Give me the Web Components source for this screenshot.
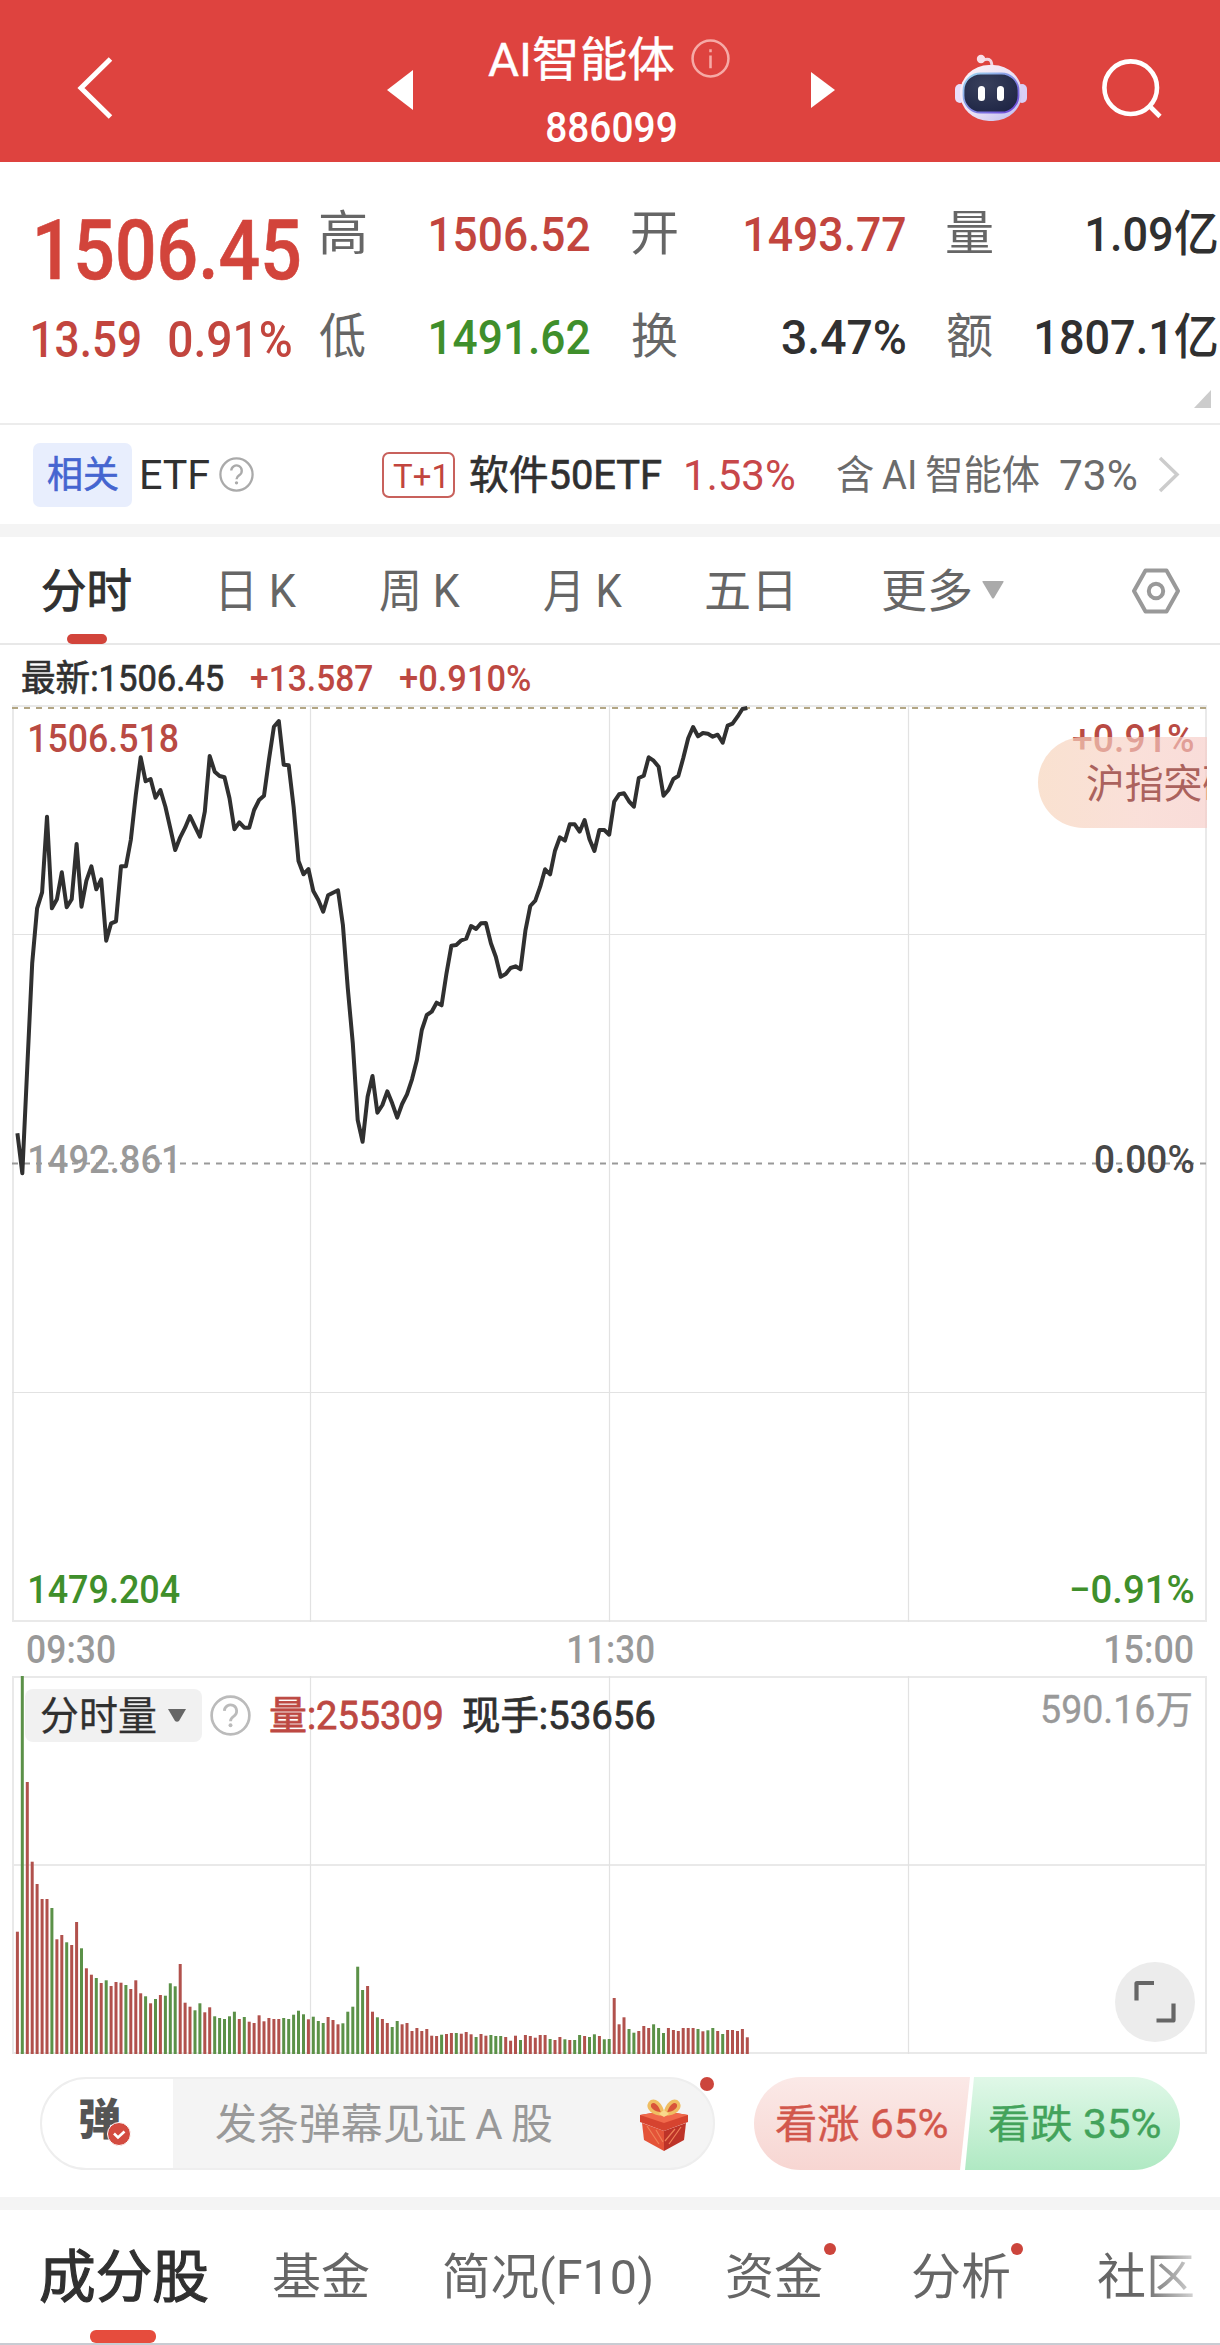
<!DOCTYPE html>
<html lang="zh-CN">
<head>
<meta charset="utf-8">
<title>AI智能体 886099</title>
<style>
    body {
        margin: 0;
        background: #fff;
        width: 1220px;
        height: 2345px;
        overflow: hidden;
        font-family: Roboto, "Noto Sans CJK SC", sans-serif;
        color: #303030;
        --up: #c2453e;
        --down: #3f8f2b;
        --grey: #666;
        --pale: #999;
        --line: #e9e9e9;
    }
</style>
</head>
<body>
<stock-page></stock-page>

<script>
const FONT = 'Roboto, "Noto Sans CJK SC", sans-serif';
const measure = document.createElement('canvas').getContext('2d');

// every element below shares this: template in, shadow root out
class BaseElement extends HTMLElement {
    constructor() {
        super();
        this._shadowRoot = this.attachShadow({ mode: 'open' });
    }

    connectedCallback() {
        const template = document.createElement('template');
        template.innerHTML = this._templateContent();
        this._shadowRoot.appendChild(template.content.cloneNode(true));
    }
}

// One line of text whose ink fills exactly `w` pixels. `ml` is the space before it,
// `stroke` thickens a regular weight to something between regular and medium.
class FitText extends BaseElement {
    _templateContent() {
        const size = Number(this.getAttribute('size'));
        const w = Number(this.getAttribute('w'));
        const weight = this.getAttribute('weight') || 500;
        const ml = this.getAttribute('ml') || 0;
        const stroke = this.getAttribute('stroke') || 0;
        measure.font = `${weight} ${size}px ${FONT}`;
        const m = measure.measureText(this.textContent);
        const scale = w / (m.actualBoundingBoxRight + m.actualBoundingBoxLeft);
        const shift = m.actualBoundingBoxLeft * scale;
        return `
            <style>
                :host {
                    display: block;
                    flex: none;
                    width: ${w}px;
                    height: ${size}px;
                    margin-left: ${ml}px;
                    font: ${weight} ${size}px/${size}px ${FONT};
                    white-space: nowrap;
                    -webkit-text-stroke: ${stroke}px currentColor;
                }
                span {
                    display: block;
                    width: max-content;
                    transform-origin: 0 50%;
                    transform: translate(${shift}px, 1px) scaleX(${scale});
                }
            </style>
            <span><slot></slot></span>
        `;
    }
}

class HelpIcon extends BaseElement {
    _templateContent() {
        const size = this.getAttribute('size');
        const mark = this.getAttribute('mark') || '?';
        return `
            <style>
                :host { display: block; flex: none; width: ${size}px; height: ${size}px; color: #bbb; }
                svg { display: block; }
            </style>
            <svg width="${size}" height="${size}" viewBox="0 0 40 40">
                <circle cx="20" cy="20" r="18.4" fill="none" stroke="currentColor" stroke-width="2.6"/>
                ${mark === 'i'
                    ? '<path d="M20 17v13M20 10.500v3" stroke="currentColor" stroke-width="2.600"/>'
                    : '<path d="M14 15.500a6 6 0 1 1 9.500 5c-2.200 1.500-3.500 2.300-3.500 5" fill="none" stroke="currentColor" stroke-width="2.700"/><circle cx="20" cy="29.500" r="1.900" fill="currentColor"/>'}
            </svg>
        `;
    }
}

class StockHeader extends BaseElement {
    _templateContent() {
        return `
            <style>
                :host {
                    display: flex;
                    align-items: center;
                    box-sizing: border-box;
                    height: 162px;
                    padding: 14px 0 0 77px;
                    background: #de433f;
                    color: #fff;
                }
                svg { display: block; flex: none; }
                .middle { width: 398px; margin-top: 6px; }
                .title { display: flex; align-items: center; margin: 0 0 24px 75px; }
                help-icon { margin-left: 17px; color: #f6aaa6; }
                .prev { margin: 4px 0 0 274px; }
                .next { margin-top: 4px; }
                .robot { margin-left: 120px; }
                .search { margin-left: 75px; }
            </style>
            <svg width="36" height="64" viewBox="0 0 36 64"><path d="M33.500 3 4 32l29.500 29" fill="none" stroke="#fff" stroke-width="5"/></svg>
            <svg class="prev" width="26" height="40" viewBox="0 0 26 40"><path d="M0 20 26 0v40z" fill="#fff"/></svg>
            <div class="middle">
                <div class="title">
                    <fit-text size="47" w="186" weight="400" stroke=".4">AI智能体</fit-text>
                    <help-icon size="39" mark="i"></help-icon>
                </div>
                <fit-text size="42" w="129" ml="134">886099</fit-text>
            </div>
            <svg class="next" width="24" height="36" viewBox="0 0 24 36"><path d="M24 18 0 0v36z" fill="#fff"/></svg>
            <svg class="robot" width="72" height="68" viewBox="0 0 72 68">
                <defs>
                    <linearGradient id="shell" x1="0" y1="0" x2="1" y2="1">
                        <stop offset="0" stop-color="#fff4f7"/><stop offset=".55" stop-color="#e9e0f5"/><stop offset="1" stop-color="#b9b8ee"/>
                    </linearGradient>
                    <linearGradient id="rim" x1="0" y1="0" x2="1" y2="1">
                        <stop offset="0" stop-color="#9fdcf0"/><stop offset="1" stop-color="#6a3fd8"/>
                    </linearGradient>
                    <radialGradient id="face" cx=".4" cy=".3" r=".8">
                        <stop offset="0" stop-color="#39405c"/><stop offset="1" stop-color="#1d2444"/>
                    </radialGradient>
                </defs>
                <path d="M28 6c7-2 9 0 9 8" fill="none" stroke="#f2d6e2" stroke-width="3"/>
                <circle cx="26" cy="5" r="4.200" fill="#f9dfe8"/>
                <rect x="0" y="30" width="10" height="19" rx="5" fill="#e9defa"/>
                <rect x="62" y="30" width="10" height="19" rx="5" fill="#d9cff5"/>
                <rect x="5" y="11" width="62" height="56" rx="29" fill="url(#shell)"/>
                <rect x="8.500" y="19.500" width="55" height="39" rx="17" fill="url(#face)" stroke="url(#rim)" stroke-width="1.800"/>
                <rect x="23" y="32" width="7" height="15" rx="3.500" fill="#fff"/>
                <rect x="42" y="32" width="7" height="15" rx="3.500" fill="#fff"/>
            </svg>
            <svg class="search" width="62" height="62" viewBox="0 0 62 62">
                <circle cx="28.700" cy="30.700" r="26.300" fill="none" stroke="#fff" stroke-width="4.600"/>
                <path d="m47.500 49 10.500 10.500" stroke="#fff" stroke-width="4.600"/>
            </svg>
        `;
    }
}

class StockQuote extends BaseElement {
    _templateContent() {
        const cells = [
            ['高', '1506.52', 158, 'up'], ['开', '1493.77', 159, 'up'], ['量', '1.09亿', 129, ''],
            ['低', '1491.62', 158, 'down'], ['换', '3.47%', 123, ''], ['额', '1807.1亿', 180, '']
        ];
        return `
            <style>
                :host {
                    display: flex;
                    position: relative;
                    box-sizing: border-box;
                    height: 263px;
                    border-bottom: 2px solid #ececec;
                }
                .price { width: 319px; padding-top: 46px; box-sizing: border-box; color: #d2443b; }
                .change { display: flex; margin-top: 23px; color: var(--up); }
                .grid {
                    display: grid;
                    grid-template-columns: 46px 224px 88px 228px 87px 225px;
                    grid-template-rows: 103px 103px;
                    padding-top: 20px;
                    align-items: center;
                    justify-items: end;
                }
                .label { color: var(--grey); margin-bottom: 2px; }
                .up { color: var(--up); }
                .down { color: var(--down); }
                .corner { position: absolute; right: 9px; bottom: 15px; }
            </style>
            <div class="price">
                <fit-text size="83" w="262" ml="37" stroke=".6">1506.45</fit-text>
                <div class="change">
                    <fit-text size="50" w="107" ml="33">13.59</fit-text>
                    <fit-text size="50" w="122" ml="29">0.91%</fit-text>
                </div>
            </div>
            <div class="grid">
                ${cells.map((c) => `
                    <fit-text class="label" size="48" w="45" weight="400">${c[0]}</fit-text>
                    <fit-text class="${c[3]}" size="49" w="${c[2]}">${c[1]}</fit-text>
                `).join('')}
            </div>
            <svg class="corner" width="17" height="18" viewBox="0 0 17 18"><path d="M17 0v18H0z" fill="#ccc"/></svg>
        `;
    }
}

class RelatedEtf extends BaseElement {
    _templateContent() {
        return `
            <style>
                :host {
                    display: flex;
                    align-items: center;
                    height: 99px;
                    padding-left: 33px;
                    border-bottom: 13px solid #f4f4f4;
                }
                .tag {
                    display: flex;
                    align-items: center;
                    width: 99px;
                    height: 64px;
                    border-radius: 7px;
                    background: #e8eefd;
                    color: #4565d0;
                }
                help-icon { margin-left: 10px; color: #aaa; }
                .t1 {
                    display: flex;
                    align-items: center;
                    box-sizing: border-box;
                    width: 73px;
                    height: 46px;
                    margin-left: 128px;
                    border: 2px solid #c8615c;
                    border-radius: 7px;
                    color: var(--up);
                }
                .up { color: #c7474a; }
                .soft { color: #6b6b6b; }
                svg { margin-left: 22px; }
            </style>
            <div class="tag"><fit-text size="37" w="70" ml="15" weight="400" stroke=".6">相关</fit-text></div>
            <fit-text size="40" w="67" ml="10" weight="400">ETF</fit-text>
            <help-icon size="35"></help-icon>
            <div class="t1"><fit-text size="34" w="51" ml="9" weight="400">T+1</fit-text></div>
            <fit-text size="40" w="191" ml="15" weight="400" stroke=".7">软件50ETF</fit-text>
            <fit-text class="up" size="42" w="108" ml="25" weight="400">1.53%</fit-text>
            <fit-text class="soft" size="40" w="202" ml="43" weight="400">含&#8201;AI&#8201;智能体</fit-text>
            <fit-text class="soft" size="42" w="76" ml="21" weight="400">73%</fit-text>
            <svg width="22" height="37" viewBox="0 0 22 37"><path d="M2 2l17 16.500L2 35" fill="none" stroke="#ccc" stroke-width="3.500"/></svg>
        `;
    }
}

class PeriodTabs extends BaseElement {
    _templateContent() {
        const tabs = [
            ['日 K', 74, 91], ['周 K', 80, 84], ['月 K', 78, 84], ['五日', 85, 84], ['更多', 88, 92]
        ];
        return `
            <style>
                :host {
                    display: flex;
                    align-items: center;
                    box-sizing: border-box;
                    height: 108px;
                    border-bottom: 2px solid #e8e8e8;
                    color: var(--grey);
                }
                .active { position: relative; margin-left: 43px; color: #303030; }
                .active i {
                    position: absolute;
                    left: 24px;
                    top: 67px;
                    width: 40px;
                    height: 10px;
                    border-radius: 5px;
                    background: #d2443b;
                }
                .more { margin: 0 0 0 11px; }
                .settings { margin: 2px 0 0 128px; }
            </style>
            <div class="active"><fit-text size="46" w="88" weight="400" stroke="1">分时</fit-text><i></i></div>
            ${tabs.map((t) => `<fit-text size="46" w="${t[1]}" ml="${t[2]}" weight="400">${t[0]}</fit-text>`).join('')}
            <svg class="more" width="22" height="18" viewBox="0 0 22 18"><path d="M1 0h20q1 0 .5 1L12 17q-1 1-2 0L.5 1Q0 0 1 0z" fill="#aaa"/></svg>
            <svg class="settings" width="48" height="46" viewBox="0 0 48 46">
                <path d="M13.500 2.500h21L46 23 34.500 43.500h-21L2 23z" fill="none" stroke="#999" stroke-width="4" stroke-linejoin="round"/>
                <circle cx="24" cy="23" r="7.200" fill="none" stroke="#999" stroke-width="4"/>
            </svg>
        `;
    }
}

// x of the n-th minute, shared by the price line and the volume bars
const STEP = 4.932;
const minuteX = (n) => 17.4 + n * STEP;

class PriceChart extends BaseElement {
    _templateContent() {
        // one value per minute, in thirds of a pixel below y = -15
        const prices = [
            1330,1450,1130,820,655,607,380,655,628,547,652,628,462,650,572,529,598,568,752,700,
            694,529,529,450,315,202,274,267,323,300,350,415,480,442,413,378,410,440,365,198,
            245,258,262,325,418,397,413,413,360,330,317,210,110,93,224,226,350,513,553,537,
            603,630,665,616,608,601,705,895,1060,1290,1355,1220,1158,1268,1245,1204,1240,1283,1242,1213,
            1168,1110,1020,975,965,938,946,850,767,765,751,746,708,717,700,699,760,800,860,852,
            834,829,838,722,648,632,590,538,553,482,442,452,403,403,425,390,448,483,420,420,
            434,335,313,310,334,350,264,257,202,212,230,317,300,267,258,205,145,111,139,129,
            131,140,134,158,107,101,80,57,54
        ];
        const points = prices.map((p, i) => `${minuteX(i).toFixed(1)},${(p / 3 - 15).toFixed(1)}`).join(' ');
        return `
            <style>
                :host { display: block; position: relative; height: 917px; }
                svg { display: block; }
                fit-text { position: absolute; }
                .l { left: 30px; }
                .r { right: 27px; }
                .top { top: 13.500px; color: #b94a43; }
                .mid { top: 434.500px; }
                .low { top: 864.500px; color: var(--down); }
                .pill {
                    position: absolute;
                    left: 1038px;
                    top: 32px;
                    width: 169px;
                    height: 91px;
                    box-sizing: border-box;
                    padding: 27px 0 0 49px;
                    overflow: hidden;
                    border-radius: 46px 0 0 46px;
                    background: linear-gradient(90deg, rgba(247, 213, 188, .7), rgba(247, 207, 197, .65) 60%, rgba(246, 202, 197, .65));
                    color: #ab625d;
                }
            </style>
            <svg width="1220" height="917" viewBox="0 0 1220 917">
                <g fill="none" stroke="#e9e9e9" stroke-width="2">
                    <path d="M12 1h1195M13 0v917M1206 0v917M12 916h1195"/>
                    <path d="M310.500 0v917M609.500 0v917M908.500 0v917M12 229.500h1194M12 687.500h1194" stroke="#e2e2e2" stroke-width="1.200"/>
                </g>
                <path d="M12 3h1195" stroke="#b3a684" stroke-width="2" stroke-dasharray="6 6"/>
                <path d="M12 458.500h1195" stroke="#999" stroke-width="2" stroke-dasharray="6 6"/>
                <polyline points="${points}" fill="none" stroke="#303030" stroke-width="4" stroke-linejoin="round"/>
            </svg>
            <fit-text class="l top" size="39" w="148">1506.518</fit-text>
            <fit-text class="l mid" size="39" w="145" style="color: #999">1492.861</fit-text>
            <fit-text class="l low" size="39" w="150">1479.204</fit-text>
            <fit-text class="r top" size="39" w="120">+0.91%</fit-text>
            <fit-text class="r mid" size="39" w="98" style="color: #484848">0.00%</fit-text>
            <fit-text class="r low" size="39" w="122">−0.91%</fit-text>
            <div class="pill"><fit-text size="40" w="153" weight="400">沪指突破</fit-text></div>
        `;
    }
}

class VolumeChart extends BaseElement {
    _templateContent() {
        // bar height (1134 fills the chart) and its direction, minute by minute
        const bars = `367r 1134g 816r 577r 510r 465r 465r 438g 344r 357r 335g 327r 396r 317g 257r 238r 228g 213r 221g 204r
            216r 214r 207g 195r 221r 182r 173g 152r 165g 177r 175g 212g 203g 270r 154r 142r 131g 152g 125r 140r
            113g 108g 105g 113g 127g 105r 111g 97r 93r 116r 98r 108r 105r 105r 108g 105g 118g 130g 119g 104r
            112g 99g 93g 111r 102r 89r 92g 127g 142g 262g 192g 204r 127r 110g 105r 93r 81g 99g 89r 93r
            69r 78r 69r 75r 55r 54r 58g 60r 63r 63g 61r 66r 59r 51g 60r 55r 57g 54g 54g 51r
            40r 55r 42g 57r 54r 49r 57r 57r 45g 42r 51r 44g 42r 42g 57g 54r 51g 59g 54r 44g
            45g 168r 89r 110r 75g 64g 69r 84r 78r 89g 78g 63g 78r 72r 69r 78r 78r 78r 75g 68r
            71g 78g 69r 60g 72r 72r 69r 75r 50r`.trim().split(/\s+/);
        const rects = bars.map((b, i) => {
            const h = parseInt(b, 10) / 3;
            const color = b.endsWith('r') ? '#b1514c' : '#5b9148';
            return `<rect x="${(minuteX(i) - 1.5).toFixed(1)}" y="${(378 - h).toFixed(1)}" width="3" height="${h.toFixed(1)}" fill="${color}"/>`;
        }).join('');
        return `
            <style>
                :host { display: block; position: relative; height: 378px; }
                .plot { display: block; }
                .legend {
                    position: absolute;
                    left: 25px;
                    top: 13px;
                    display: flex;
                    align-items: center;
                    height: 53px;
                }
                .select {
                    display: flex;
                    align-items: center;
                    width: 177px;
                    height: 53px;
                    border-radius: 8px;
                    background: #f1f1f1;
                }
                .select svg { margin-left: 12px; }
                help-icon { margin-left: 8px; }
                .max { position: absolute; right: 29px; top: 14px; color: var(--pale); }
                .zoom { position: absolute; left: 1115px; top: 286px; }
            </style>
            <svg class="plot" width="1220" height="378" viewBox="0 0 1220 378">
                <g fill="none" stroke="#e9e9e9" stroke-width="2">
                    <path d="M12 1h1195M13 0v378M1206 0v378M12 377h1195M12 189h1194"/>
                    <path d="M310.500 0v378M609.500 0v378M908.500 0v378" stroke="#e2e2e2" stroke-width="1.200"/>
                </g>
                ${rects}
            </svg>
            <div class="legend">
                <div class="select">
                    <fit-text size="40" w="115" ml="16" weight="400" stroke=".3">分时量</fit-text>
                    <svg width="18" height="13" viewBox="0 0 18 13"><path d="M0 0h18L11 12q-2 1.500-4 0z" fill="#666"/></svg>
                </div>
                <help-icon size="41"></help-icon>
                <fit-text size="39" w="172" ml="19" weight="400" stroke=".8" style="color: #bd4842">量:255309</fit-text>
                <fit-text size="39" w="192" ml="21" weight="400" stroke=".8">现手:53656</fit-text>
            </div>
            <fit-text class="max" size="39" w="149" weight="400" stroke=".4">590.16万</fit-text>
            <svg class="zoom" width="80" height="80" viewBox="0 0 80 80">
                <circle cx="40" cy="40" r="40" fill="#ececec"/>
                <path d="M21.500 38.500v-17q0-.5.5-.5h17M41.500 58.500h16.500q.5 0 .5-.5V41.500" fill="none" stroke="#666" stroke-width="4.200"/>
            </svg>
        `;
    }
}

class TimeAxis extends BaseElement {
    _templateContent() {
        return `
            <style>
                :host { display: flex; align-items: center; height: 54px; color: var(--pale); }
            </style>
            <fit-text size="39" w="88" ml="27">09:30</fit-text>
            <fit-text size="39" w="85" ml="454">11:30</fit-text>
            <fit-text size="39" w="87" ml="452">15:00</fit-text>
        `;
    }
}

class DanmuBar extends BaseElement {
    _templateContent() {
        return `
            <style>
                :host {
                    display: flex;
                    box-sizing: border-box;
                    height: 156px;
                    padding: 23px 0 0 40px;
                    border-bottom: 13px solid #f4f4f4;
                }
                .input {
                    position: relative;
                    display: flex;
                    box-sizing: border-box;
                    width: 675px;
                    height: 93px;
                    border: 2px solid #eee;
                    border-radius: 47px;
                    background: linear-gradient(90deg, #fff 131px, #f4f4f4 131px);
                    align-items: center;
                    color: var(--pale);
                }
                .icon { color: #555; margin-bottom: 8px; }
                .check { position: absolute; left: 65px; top: 43px; }
                .gift { margin-left: 87px; margin-top: 2px; }
                .dot { position: absolute; right: -1px; top: -2px; width: 14px; height: 14px; border-radius: 50%; background: #cc453c; }
                .vote { display: flex; width: 426px; height: 93px; margin-left: 39px; border-radius: 47px; overflow: hidden; }
                .vote div { display: flex; align-items: center; }
                .bull {
                    width: 216px;
                    background: linear-gradient(#fbe9e7, #f7d6d2);
                    clip-path: polygon(0 0, 100% 0, 206px 100%, 0 100%);
                    color: #d2574c;
                }
                .bear {
                    width: 215px;
                    margin-left: -5px;
                    background: linear-gradient(#e0f8e8, #b0e9c3);
                    clip-path: polygon(9px 0, 100% 0, 100% 100%, 0 100%);
                    color: #43a35b;
                }
            </style>
            <div class="input">
                <fit-text class="icon" size="43" w="40" ml="38" weight="900">弹</fit-text>
                <svg class="check" width="24" height="24" viewBox="0 0 24 24">
                    <circle cx="12" cy="12" r="11.500" fill="#d34b40" stroke="#fff"/>
                    <path d="m7 11.500 4 4 6.500-6" fill="none" stroke="#fff" stroke-width="2.600"/>
                </svg>
                <fit-text size="42" w="336" ml="96" weight="400">发条弹幕见证&#8201;A&#8201;股</fit-text>
                <svg class="gift" width="50" height="52" viewBox="0 0 50 52">
                    <path d="M3 24l22 8v20L5 41z" fill="#e45338"/>
                    <path d="M47 24l-22 8v20l20-11z" fill="#bd3328"/>
                    <path d="M1 16 25 12l24 4v7l-24 9L1 23z" fill="#d6432f"/>
                    <path d="M1 16 25 12l24 4-24 8z" fill="#f0694b"/>
                    <path d="M8 27l12 18M17 31l7 12M42 28 30 45M36 30l-10 12" stroke="#ef8057" stroke-width="1.200"/>
                    <path d="M24 15C22 5 15-1 11 4c-3 5 3 11 13 11zM26 15C28 5 35-1 39 4c3 5-3 11-13 11z" fill="#d9543a" stroke="#efbd62" stroke-width="3.400"/>
                    <path d="M20 15l5-4 5 4-5 3z" fill="#f9d98c"/>
                </svg>
                <i class="dot"></i>
            </div>
            <div class="vote">
                <div class="bull"><fit-text size="40" w="171" ml="22" weight="400" stroke=".4">看涨 65%</fit-text></div>
                <div class="bear"><fit-text size="40" w="171" ml="24" weight="400" stroke=".4">看跌 35%</fit-text></div>
            </div>
        `;
    }
}

class SectionTabs extends BaseElement {
    _templateContent() {
        return `
            <style>
                :host {
                    display: flex;
                    align-items: center;
                    box-sizing: border-box;
                    height: 135px;
                    border-bottom: 2px solid #c9ccd3;
                    color: var(--grey);
                }
                .tab { position: relative; }
                .active { color: #303030; }
                .active i {
                    position: absolute;
                    left: 49px;
                    top: 82px;
                    width: 66px;
                    height: 13px;
                    border-radius: 6px;
                    background: #e64c3d;
                }
                .dot::after {
                    content: '';
                    position: absolute;
                    right: -14px;
                    top: -9px;
                    width: 12px;
                    height: 12px;
                    border-radius: 50%;
                    background: #cc453c;
                }
                .fade { -webkit-mask-image: linear-gradient(90deg, #000 45%, rgba(0, 0, 0, .3)); mask-image: linear-gradient(90deg, #000 45%, rgba(0, 0, 0, .3)); }
            </style>
            <div class="tab active" style="margin-left: 41px"><fit-text size="57" w="166" weight="400" stroke="1.2">成分股</fit-text><i></i></div>
            <fit-text size="49" w="96" ml="66" weight="400">基金</fit-text>
            <fit-text size="49" w="207" ml="75" weight="400">简况(F10)</fit-text>
            <div class="tab dot" style="margin-left: 76px"><fit-text size="49" w="95" weight="400">资金</fit-text></div>
            <div class="tab dot" style="margin-left: 91px"><fit-text size="49" w="96" weight="400">分析</fit-text></div>
            <fit-text class="fade" size="49" w="95" ml="89" weight="400">社区</fit-text>
        `;
    }
}

class StockPage extends BaseElement {
    _templateContent() {
        return `
            <style>
                :host { display: block; }
                .latest { display: flex; align-items: center; box-sizing: border-box; height: 60px; padding-top: 6px; }
                .up { color: #bd4842; }
            </style>
            <stock-header></stock-header>
            <stock-quote></stock-quote>
            <related-etf></related-etf>
            <period-tabs></period-tabs>
            <div class="latest">
                <fit-text size="36" w="201" ml="22" weight="400" stroke=".7">最新:1506.45</fit-text>
                <fit-text class="up" size="36" w="121" ml="28">+13.587</fit-text>
                <fit-text class="up" size="36" w="130" ml="28">+0.910%</fit-text>
            </div>
            <price-chart></price-chart>
            <time-axis></time-axis>
            <volume-chart></volume-chart>
            <danmu-bar></danmu-bar>
            <section-tabs></section-tabs>
        `;
    }
}

customElements.define('fit-text', FitText);
customElements.define('help-icon', HelpIcon);
customElements.define('stock-header', StockHeader);
customElements.define('stock-quote', StockQuote);
customElements.define('related-etf', RelatedEtf);
customElements.define('period-tabs', PeriodTabs);
customElements.define('price-chart', PriceChart);
customElements.define('time-axis', TimeAxis);
customElements.define('volume-chart', VolumeChart);
customElements.define('danmu-bar', DanmuBar);
customElements.define('section-tabs', SectionTabs);
customElements.define('stock-page', StockPage);
</script>
</body>
</html>
